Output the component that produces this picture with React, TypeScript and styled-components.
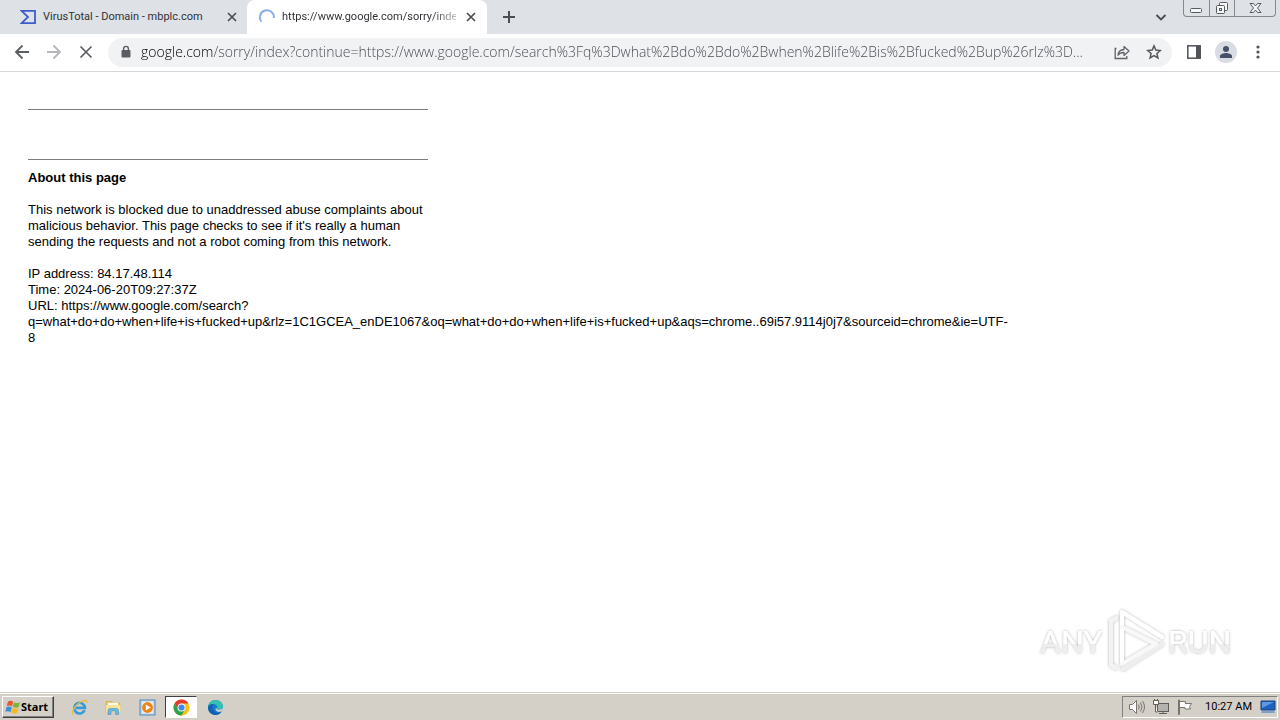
import React from "react";
import styled, { createGlobalStyle } from "styled-components";

const GlobalStyle = createGlobalStyle`
  *, *::before, *::after { box-sizing: border-box; }
  body { margin: 0; background: #fff; color: #000; font-family: "Liberation Sans", Arial, sans-serif; }
  button { border: 0; padding: 0; margin: 0; background: none; color: inherit; font: inherit; }
  svg { display: block; flex: none; }
`;

const uiFont = `Roboto, Tahoma, sans-serif`;

const Screen = styled.div`
  display: flex;
  flex-direction: column;
  min-height: 100vh;
`;

const TabStrip = styled.header`
  display: flex;
  height: 34px;
  background: #dee1e6;
  color: #3c4043;
`;

const TabList = styled.nav`
  display: flex;
  flex: none;
  padding-left: 7px;
`;

const Tab = styled.div<{ $active?: boolean }>`
  position: relative;
  display: flex;
  align-items: center;
  width: 240px;
  height: 34px;
  padding: ${(p) => (p.$active ? "0 9px 0 12px" : "0 8px 0 13px")};
  border-radius: 8px 8px 0 0;
  background: ${(p) => (p.$active ? "#fff" : "transparent")};
`;

const TabTitle = styled.button<{ $fade?: boolean }>`
  flex: 1;
  min-width: 0;
  margin: 0 8px 0 7px;
  overflow: hidden;
  white-space: nowrap;
  text-align: left;
  font: 11px/16px ${uiFont};
  color: #303236;
  mask-image: ${(p) => (p.$fade ? "linear-gradient(to right, #000 85%, rgba(0, 0, 0, .3))" : "none")};
`;

const IconButton = styled.button<{ $size: number; $color?: string }>`
  display: flex;
  flex: none;
  align-items: center;
  justify-content: center;
  width: ${(p) => p.$size}px;
  height: ${(p) => p.$size}px;
  color: ${(p) => p.$color ?? "#4a4d51"};
`;

const StripActions = styled.div`
  display: flex;
  align-items: center;
  padding-left: 15px;
  flex: 1;
  justify-content: space-between;
`;

const WindowControls = styled.div`
  display: flex;
  flex: none;
  height: 17px;
  margin: 0 4px 0 14px;
  border: 1px solid #85888d;
  border-top: 0;
  border-radius: 0 0 4px 4px;
`;

const WindowButton = styled.button<{ $wide?: boolean }>`
  display: flex;
  align-items: center;
  justify-content: center;
  width: ${(p) => (p.$wide ? 41 : 25)}px;
  height: 16px;

  & + & { border-left: 1px solid #85888d; }
`;

const Toolbar = styled.div`
  display: flex;
  align-items: center;
  height: 38px;
  padding: 0 10px 1px 10px;
  border-bottom: 1px solid #d5d7da;
  background: #fff;
`;

const NavButtons = styled.div`
  display: flex;
  gap: 8px;
  margin-right: 10px;
`;

const Omnibox = styled.form`
  display: flex;
  flex: 1;
  min-width: 0;
  align-items: center;
  height: 29px;
  padding: 0 6px 0 10px;
  border-radius: 15px;
  background: #f0f2f4;
`;

const Address = styled.input`
  flex: 1;
  min-width: 0;
  height: 24px;
  margin: 0 8px 0 7px;
  padding: 0;
  border: 0;
  outline: 0;
  font: 300 14px/24px "Open Sans", Tahoma, sans-serif;
  color: transparent;
  background: linear-gradient(to right, #000 73px, #45494e 73px);
  background-clip: text;
  -webkit-background-clip: text;
`;

const OmniActions = styled.div`
  display: flex;
  gap: 8px;
`;

const BrowserActions = styled.div`
  display: flex;
  gap: 8px;
  margin-left: 10px;
`;

const Avatar = styled.button`
  display: flex;
  align-items: center;
  justify-content: center;
  width: 22px;
  height: 22px;
  margin: 1px;
  border-radius: 50%;
  background: #d9dce2;
`;

const Page = styled.main`
  position: relative;
  flex: 1;
  padding: 37px 28px 28px;
  font-size: 13px;
  line-height: 16px;
`;

const Rule = styled.hr`
  max-width: 400px;
  height: 1px;
  margin: 0 0 49px;
  border: 0;
  background: #7d7d7d;

  & + & { margin-bottom: 10px; }
`;

const Heading = styled.h1`
  margin: 0 0 16px;
  font-size: 13px;
  line-height: 16px;
`;

const Paragraph = styled.p`
  max-width: 400px;
  margin: 0 0 16px;
`;

const Watermark = styled.div`
  position: absolute;
  right: 44px;
  bottom: 15px;
`;

const Taskbar = styled.footer`
  display: flex;
  align-items: center;
  height: 28px;
  padding: 1px 2px 0;
  border-top: 1px solid #d4d0c8;
  background: #d4d0c8;
  box-shadow: inset 0 1px #fff;
`;

const StartButton = styled.button`
  display: flex;
  align-items: center;
  width: 52px;
  height: 22px;
  padding-left: 2px;
  border: 1px solid;
  border-color: #fff #404040 #404040 #fff;
  box-shadow: inset -1px -1px #808080;
  font: bold 11px/16px "Noto Sans", Tahoma, sans-serif;
`;

const QuickLaunch = styled.div`
  display: flex;
  flex: 1;
  gap: 2px;
  margin-left: 9px;
`;

const LaunchButton = styled.button<{ $pressed?: boolean }>`
  display: flex;
  align-items: center;
  justify-content: center;
  width: 32px;
  height: 22px;
  border: 1px solid;
  border-color: ${(p) => (p.$pressed ? "#404040 #fff #fff #404040" : "transparent")};
  background: ${(p) => (p.$pressed ? "#fff" : "none")};
`;

const Tray = styled.div`
  display: flex;
  align-items: center;
  gap: 8px;
  height: 22px;
  padding: 0 1px 0 6px;
  border: 1px solid;
  border-color: #808080 #fff #fff #808080;
`;

const Clock = styled.time`
  margin-left: 4px;
  font: 11px/16px ${uiFont};
`;

function CloseIcon() {
  return (
    <svg width="10" height="10" viewBox="0 0 10 10" stroke="currentColor" strokeWidth="1.7">
      <path d="M1 1l8 8M9 1L1 9" />
    </svg>
  );
}

function VirusTotalIcon() {
  return (
    <svg width="16" height="16" viewBox="0 0 16 16" fill="none" stroke="#3d5bd0" strokeWidth="1.8">
      <path d="M1.6 1.9H15v12.2H1.6L8 8z" />
    </svg>
  );
}

function StartFlag() {
  return (
    <svg width="16" height="16" viewBox="0 0 16 16">
      <path d="M3 2.4C5 1.3 6.7 1.6 8.2 2.7L7 7.4C5.4 6.3 3.6 6.2 1.8 7z" fill="#e8582a" />
      <path d="M9 3.2c2 1.1 4 1.1 6 .1l-1.3 4.8c-2 .9-4 .8-5.9-.3z" fill="#7db53c" />
      <path d="M1.5 8c1.9-.9 3.7-.8 5.3.4l-1.3 4.8C4 12 2 12 .3 12.9z" fill="#3a8fd8" />
      <path d="M7.6 8.8c1.9 1.2 3.8 1.3 5.9.4l-1.3 4.6c-2 1-4 .9-5.9-.3z" fill="#f5b921" />
    </svg>
  );
}

function IeIcon() {
  return (
    <svg width="17" height="17" viewBox="0 0 17 17" fill="none">
      <path d="M13.6 11.2A5.4 5.4 0 1 1 14 8.9H5" stroke="#369bdc" strokeWidth="2.6" />
      <path d="M2.4 15.4C-.5 14 3 8 7.5 4.5S16.6.2 15.8 3.8" stroke="#e8bd3b" strokeWidth="1.3" />
    </svg>
  );
}

function FolderIcon() {
  return (
    <svg width="17" height="17" viewBox="0 0 17 17">
      <path d="M1 2.5h6l1 1.6h7V13H1z" fill="#e9c865" stroke="#c9a64a" strokeWidth=".6" />
      <path d="M3 3.8h10V9H3z" fill="#fffbe4" />
      <path d="M1 6h14.5v7.4H1z" fill="#f7e39c" />
      <path d="M3 15.5v-4q0-2 2-2h6.5q2 0 2 2v4h-3V12H6v3.5z" fill="#69b7e4" stroke="#4a92bf" strokeWidth=".6" />
    </svg>
  );
}

function MediaIcon() {
  return (
    <svg width="17" height="17" viewBox="0 0 17 17">
      <rect x="1" y="1" width="15" height="15" fill="#b9d6ec" stroke="#4f89b8" />
      <rect x="3" y="2.5" width="11" height="12" fill="#e5edf2" />
      <circle cx="8.5" cy="8.5" r="5.4" fill="#f08316" />
      <path d="M6.8 5.4l5 3.1-5 3.1z" fill="#fff" />
    </svg>
  );
}

function ChromeIcon() {
  return (
    <svg width="17" height="17" viewBox="0 0 16 16">
      <circle cx="8" cy="8" r="7.5" fill="#fbc116" />
      <path d="M1.5 4.25A7.5 7.5 0 0 1 14.5 4.25H8L4.75 9.9z" fill="#e33b2e" />
      <path d="M1.5 4.25A7.5 7.5 0 0 0 8 15.5l3.25-5.6H4.75z" fill="#2ba24c" />
      <circle cx="8" cy="8" r="3.7" fill="#fff" />
      <circle cx="8" cy="8" r="2.9" fill="#4285f4" />
    </svg>
  );
}

function EdgeIcon() {
  return (
    <svg width="17" height="17" viewBox="0 0 17 17">
      <circle cx="8.5" cy="8.5" r="7.5" fill="#1679c9" />
      <path d="M1 8.4C1.3 3.8 4.5 1 8.5 1c4.4 0 7.5 3 7.5 6.2 0 2.3-1.8 3.6-3.8 3.6-1.7 0-2.6-.7-2.2-1.4C11 7.3 9.3 5.2 6.8 5.2 3.8 5.2 1.5 6.7 1 8.4z" fill="#35c1b1" />
      <path d="M1 8.4C1.5 6 4 4.7 6.8 5.2 5 6.5 4.9 10 6.8 12.1c2.1 2.3 5.3 2.1 7.6 1A7.5 7.5 0 0 1 1 8.4z" fill="#1261b0" />
      <path d="M10 9.4c-.4.7.5 1.4 2.2 1.4 1.4 0 2.7-.6 3.4-1.7l.4 2-1.7 1.4c-2.5 1-5.7.2-6-3z" fill="#d4d0c8" />
    </svg>
  );
}

function AnyRunLogo() {
  return (
    <svg width="204" height="70" viewBox="0 0 204 70" role="img" aria-label="ANY RUN">
      <defs>
        <filter id="soft" x="-10%" y="-10%" width="120%" height="120%">
          <feDropShadow dx="0" dy="0" stdDeviation="1.5" floodColor="#000" floodOpacity=".32" />
        </filter>
        <linearGradient id="fade" x1="0" y1="0" x2="0" y2="1">
          <stop offset=".55" stopColor="#fff" />
          <stop offset=".56" stopColor="#eee" />
        </linearGradient>
      </defs>
      <g filter="url(#soft)" fill="url(#fade)" fontFamily="Roboto, sans-serif" fontSize="32">
        <text x="8" y="46">ANY</text>
        <text x="136" y="46">RUN</text>
      </g>
      <g filter="url(#soft)" fill="none" strokeLinejoin="round" strokeLinecap="round" strokeWidth="4">
        <path d="M84 11l-5 3v44l5 3" stroke="#f3f3f3" />
        <path d="M130 37L91 62" stroke="#eee" />
        <path d="M90 56V5l40 25" stroke="#fff" />
        <path d="M90 20l34 17-34 20" stroke="#f8f8f8" />
      </g>
    </svg>
  );
}

export default function App() {
  return (
    <Screen>
      <GlobalStyle />
      <TabStrip>
        <TabList aria-label="Open tabs">
          <Tab>
            <VirusTotalIcon />
            <TabTitle>VirusTotal - Domain - mbplc.com</TabTitle>
            <IconButton $size={14} aria-label="Close tab"><CloseIcon /></IconButton>
          </Tab>
          <Tab $active>
            <svg width="16" height="16" viewBox="0 0 16 16" fill="none" stroke="#8aaee6" strokeWidth="2">
              <path d="M2.4 12.6A7 7 0 1 1 14.8 9" />
            </svg>
            <TabTitle $fade>https://www.google.com/sorry/inde</TabTitle>
            <IconButton $size={14} aria-label="Close tab"><CloseIcon /></IconButton>
          </Tab>
        </TabList>
        <StripActions>
          <IconButton $size={14} aria-label="New tab">
            <svg width="14" height="14" viewBox="0 0 14 14" stroke="currentColor" strokeWidth="2">
              <path d="M7 1v12M1 7h12" />
            </svg>
          </IconButton>
          <IconButton $size={16} aria-label="Search tabs">
            <svg width="12" height="12" viewBox="0 0 12 12" fill="none" stroke="currentColor" strokeWidth="1.8">
              <path d="M1.5 4L6 8.5 10.500 4" />
            </svg>
          </IconButton>
        </StripActions>
        <WindowControls>
          <WindowButton aria-label="Minimize">
            <svg width="13" height="14" viewBox="0 0 13 14" fill="#f6f6f6" stroke="#56595e">
              <rect x=".5" y="7.500" width="11" height="4" rx="1" />
            </svg>
          </WindowButton>
          <WindowButton aria-label="Restore">
            <svg width="14" height="14" viewBox="0 0 14 14" fill="#f6f6f6" stroke="#56595e">
              <rect x="4.500" y="1.500" width="8" height="8" rx="1" />
              <rect x="1.500" y="4.500" width="8" height="8" rx="1" />
              <rect x="4.500" y="7.500" width="2" height="2" />
            </svg>
          </WindowButton>
          <WindowButton $wide aria-label="Close">
            <svg width="13" height="14" viewBox="0 0 13 14" fill="#f6f6f6" stroke="#56595e">
              <path d="M1 2.500h3.500l2 2.500 2-2.500H12L8.500 7l3.500 4.500H8.500L6.500 9l-2 2.500H1L4.500 7z" />
            </svg>
          </WindowButton>
        </WindowControls>
      </TabStrip>

      <Toolbar>
        <NavButtons>
          <IconButton $size={24} aria-label="Back">
            <svg width="16" height="16" viewBox="0 0 16 16" fill="none" stroke="#5a5d61" strokeWidth="1.800">
              <path d="M15 8H2M8.500 1.500L2 8l6.500 6.500" />
            </svg>
          </IconButton>
          <IconButton $size={24} aria-label="Forward">
            <svg width="16" height="16" viewBox="0 0 16 16" fill="none" stroke="#b4b6b9" strokeWidth="1.800">
              <path d="M1 8h13M7.500 1.500L14 8l-6.500 6.500" />
            </svg>
          </IconButton>
          <IconButton $size={24} aria-label="Stop loading">
            <svg width="14" height="14" viewBox="0 0 14 14" stroke="#5a5d61" strokeWidth="1.700">
              <path d="M1.500 1.500l11 11M12.500 1.500l-11 11" />
            </svg>
          </IconButton>
        </NavButtons>
        <Omnibox onSubmit={(e) => e.preventDefault()}>
          <IconButton $size={16} type="button" aria-label="Site information">
            <svg width="12" height="14" viewBox="0 0 12 14">
              <rect x="1.500" y="5" width="9" height="7.500" rx="1" fill="#5a5d61" />
              <path d="M3.600 5.500V3.800a2.400 2.400 0 0 1 4.800 0v1.700" fill="none" stroke="#5a5d61" strokeWidth="1.400" />
            </svg>
          </IconButton>
          <Address
            aria-label="Address"
            defaultValue="google.com/sorry/index?continue=https://www.google.com/search%3Fq%3Dwhat%2Bdo%2Bdo%2Bwhen%2Blife%2Bis%2Bfucked%2Bup%26rlz%3D..."
          />
          <OmniActions>
            <IconButton $size={24} type="button" aria-label="Share">
              <svg width="16" height="16" viewBox="0 0 16 16" fill="none" stroke="#5f6368" strokeWidth="1.300">
                <path d="M2.500 4.500H1.200v10h11.600V12" />
                <path d="M4 11.200C4.500 7 7 5.600 10 5.500V2.600l5 4.400-5 4.400V8.500C7.500 8.400 5.500 9.200 4 11.200z" strokeLinejoin="round" />
              </svg>
            </IconButton>
            <IconButton $size={24} type="button" aria-label="Bookmark this page">
              <svg width="16" height="16" viewBox="0 0 16 16" fill="none" stroke="#55585c" strokeWidth="1.500">
                <path d="M8 1.900l1.800 4.200 4.500.4-3.400 3 1 4.400L8 11.600l-3.900 2.300 1-4.400-3.400-3 4.500-.4z" />
              </svg>
            </IconButton>
          </OmniActions>
        </Omnibox>
        <BrowserActions>
          <IconButton $size={24} aria-label="Side panel">
            <svg width="14" height="14" viewBox="0 0 14 14" fill="none" stroke="#505357" strokeWidth="1.500">
              <rect x=".8" y=".8" width="12.400" height="12.400" />
              <rect x="9" y="1" width="4.500" height="12" fill="#505357" stroke="none" />
            </svg>
          </IconButton>
          <Avatar aria-label="Profile">
            <svg width="14" height="14" viewBox="0 0 14 14" fill="#46506a">
              <circle cx="7" cy="4" r="3" />
              <path d="M1 13v-2c0-2 4-3 6-3s6 1 6 3v2z" />
            </svg>
          </Avatar>
          <IconButton $size={24} aria-label="Menu">
            <svg width="4" height="14" viewBox="0 0 4 14" fill="#505357">
              <circle cx="2" cy="2" r="1.600" />
              <circle cx="2" cy="7" r="1.600" />
              <circle cx="2" cy="12" r="1.600" />
            </svg>
          </IconButton>
        </BrowserActions>
      </Toolbar>

      <Page>
        <Rule />
        <Rule />
        <Heading>About this page</Heading>
        <Paragraph>
          This network is blocked due to unaddressed abuse complaints about malicious behavior. This page checks to see
          if it's really a human sending the requests and not a robot coming from this network.
        </Paragraph>
        <Paragraph>
          IP address: 84.17.48.114
          <br />
          Time: 2024-06-20T09:27:37Z
          <br />
          URL: https://www.google.com/search?
          <br />
          q=what+do+do+when+life+is+fucked+up&amp;rlz=1C1GCEA_enDE1067&amp;oq=what+do+do+when+life+is+fucked+up&amp;aqs=chrome..69i57.9114j0j7&amp;sourceid=chrome&amp;ie=UTF-
          <br />8
        </Paragraph>
        <Watermark><AnyRunLogo /></Watermark>
      </Page>

      <Taskbar>
        <StartButton><StartFlag />Start</StartButton>
        <QuickLaunch>
          <LaunchButton aria-label="Internet Explorer"><IeIcon /></LaunchButton>
          <LaunchButton aria-label="File Explorer"><FolderIcon /></LaunchButton>
          <LaunchButton aria-label="Media Player"><MediaIcon /></LaunchButton>
          <LaunchButton $pressed aria-label="Chrome"><ChromeIcon /></LaunchButton>
          <LaunchButton aria-label="Edge"><EdgeIcon /></LaunchButton>
        </QuickLaunch>
        <Tray>
          <IconButton $size={16} aria-label="Volume">
            <svg width="16" height="16" viewBox="0 0 16 16" fill="#fff" stroke="#77756f">
              <path d="M.5 5.500h3l4-4v13l-4-4h-3z" />
              <path d="M9.500 5.500q1.500 2.500 0 5M11.500 3.500q3 4.500 0 9M13.500 2q4 6 0 12" fill="none" />
            </svg>
          </IconButton>
          <IconButton $size={16} aria-label="Network">
            <svg width="16" height="16" viewBox="0 0 16 16" fill="#fff" stroke="#5f5e59">
              <rect x="4.500" y="4.500" width="11" height="8" fill="#b5b3ad" />
              <path d="M6 14.500h8M10 12.500v2" />
              <path d="M.5 1.500h5v4h-5zM1.500 0v2M4.500 0v2M2.500 6v7h2" />
            </svg>
          </IconButton>
          <IconButton $size={16} aria-label="Action center">
            <svg width="16" height="16" viewBox="0 0 16 16" fill="#fff" stroke="#77756f">
              <path d="M2.500 2.500h6v2h6l-2 3 1 2.500H8V8.500H2.500z" />
              <path d="M1.500 1v14.500h1V1z" />
            </svg>
          </IconButton>
          <Clock>10:27 AM</Clock>
          <IconButton $size={16} aria-label="Show desktop">
            <svg width="16" height="16" viewBox="0 0 16 16">
              <path d="M1 2h14v9H1z" fill="#1f62bd" stroke="#163f7c" />
              <path d="M2 3h12L2 9z" fill="#5c9be4" />
              <path d="M2 12h12l1 2H1z" fill="#7aa0cc" />
            </svg>
          </IconButton>
        </Tray>
      </Taskbar>
    </Screen>
  );
}
